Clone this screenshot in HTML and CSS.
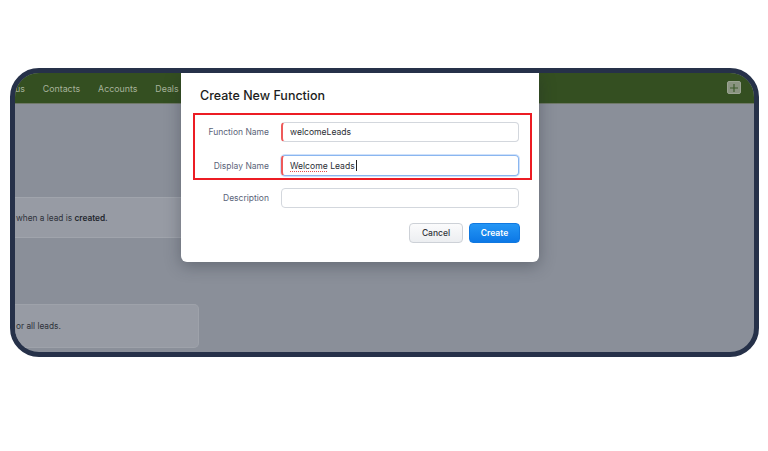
FILE: index.html
```html
<!DOCTYPE html>
<html>
<head>
<meta charset="utf-8">
<link rel="stylesheet" href="styles.css">
</head>
<body>
<div class="frame">
  <div class="screen">
    <nav class="nav">
      <span class="nav-item">us</span>
      <span class="nav-item">Contacts</span>
      <span class="nav-item">Accounts</span>
      <span class="nav-item">Deals</span>
      <span class="spacer"></span>
      <span class="plus"><svg width="10" height="10" viewBox="0 0 10 10"><path d="M5 1v8M1 5h8" stroke="#3c5a2c" stroke-width="1.2"/></svg></span>
    </nav>
    <div class="main">
      <div class="card card-wide"><span class="card-text">when a lead is <b>created.</b></span></div>
      <div class="card card-small"><span class="card-text">or all leads.</span></div>
    </div>
    <div class="modal">
      <h1 class="title">Create New Function</h1>
      <div class="highlight">
        <div class="row">
          <label class="label">Function Name</label>
          <div class="input flagged"><span>welcomeLeads</span></div>
        </div>
        <div class="row">
          <label class="label">Display Name</label>
          <div class="input flagged focus"><span><span class="spell">Welcome</span> Leads</span><span class="caret"></span></div>
        </div>
      </div>
      <div class="row row-desc">
        <label class="label">Description</label>
        <div class="input"></div>
      </div>
      <div class="actions">
        <button class="btn btn-cancel">Cancel</button>
        <button class="btn btn-create">Create</button>
      </div>
    </div>
  </div>
</div>
</body>
</html>
```

FILE: styles.css
```css
* { box-sizing: border-box; }
html, body { margin: 0; padding: 0; background: #ffffff; }
body { font-family: Inter, "Noto Sans", sans-serif; width: 768px; height: 451px; overflow: hidden; }

.frame {
  margin: 68px 0 0 10px;
  width: 749px;
  height: 289px;
  border: 5px solid #263149;
  border-radius: 29px;
  overflow: hidden;
  background: #8a8f99;
}
.screen { position: relative; height: 100%; }

.nav {
  height: 31px;
  background: #344f21;
  border-bottom: 1px solid #6f7868;
  display: flex;
  align-items: center;
  font-size: 8.8px;
  color: #a7b39b;
  gap: 18px;
  padding-right: 13px;
}
.nav-item { white-space: nowrap; }
.spacer { flex: 1; }
.plus {
  width: 14px; height: 13px;
  background: #8a9481;
  border: 1px solid #9aa392;
  border-radius: 2px;
  display: flex; align-items: center; justify-content: center;
  margin-top: -1px;
}

.main { display: flex; flex-direction: column; }
.card {
  background: #979ba4;
  border-top: 1px solid #a0a4ac;
  border-bottom: 1px solid #a0a4ac;
  font-size: 8.3px;
  color: #2e323a;
  display: flex;
  align-items: center;
  white-space: nowrap;
}
.card b { font-weight: 600; color: #23272e; }
.card-wide { margin-top: 93px; height: 41px; width: 520px; }
.card-small { margin-top: 66px; height: 44px; width: 184px; border: 1px solid #9ea2aa; border-left: none; border-radius: 0 5px 5px 0; }
.card-text { margin-left: 1px; }

.modal {
  position: absolute;
  left: 166px;
  top: 0;
  width: 358px;
  height: 189px;
  background: #ffffff;
  border-radius: 0 0 6px 6px;
  box-shadow: 0 4px 16px rgba(30, 35, 45, 0.35);
  padding: 15px 19px 0 12px;
}
.title {
  margin: 0 0 0 7px;
  font-size: 12.5px;
  font-weight: 500;
  color: #1c1d21;
  line-height: 16px;
}
.highlight {
  margin-top: 9px;
  width: 339px;
  height: 67px;
  border: 2px solid #ec1c24;
  padding-top: 7px;
  display: flex;
  flex-direction: column;
  gap: 13px;
}
.row { display: flex; align-items: center; }
.highlight .row { margin-left: -2px; }
.label {
  width: 88px;
  padding-right: 12px;
  text-align: right;
  font-size: 8.5px;
  color: #5b6479;
}
.input {
  width: 238px;
  height: 20px;
  border: 1px solid #d3d7dd;
  border-radius: 4px;
  font-size: 8.6px;
  color: #2b2e35;
  display: flex;
  align-items: center;
  padding-left: 7px;
  white-space: pre;
}
.input.flagged { border-left: 2px solid #ee5a5a; }
.input.focus { border-color: #8ab6f0; border-left-color: #ee5a5a; box-shadow: 0 0 0 1px #cfe1fa; height: 21px; }
.spell { text-decoration: underline dotted #e0504f; text-underline-offset: 2px; }
.caret { display: inline-block; width: 1px; height: 11px; background: #222; margin-left: 1px; }
.row-desc { margin-top: 8px; }

.actions {
  display: flex;
  justify-content: flex-end;
  gap: 6px;
  margin-top: 15px;
}
.btn {
  height: 20px;
  border-radius: 4px;
  font-family: Inter, "Noto Sans", sans-serif;
  font-size: 8.5px;
  font-weight: 500;
  padding: 0;
}
.btn-cancel {
  width: 54px;
  background: linear-gradient(#fbfbfc, #eceef1);
  border: 1px solid #cdd1d7;
  color: #30343b;
}
.btn-create {
  width: 51px;
  background: linear-gradient(#2496f5, #0c78e6);
  border: 1px solid #1078e0;
  color: #ffffff;
  font-weight: 600;
}
```
